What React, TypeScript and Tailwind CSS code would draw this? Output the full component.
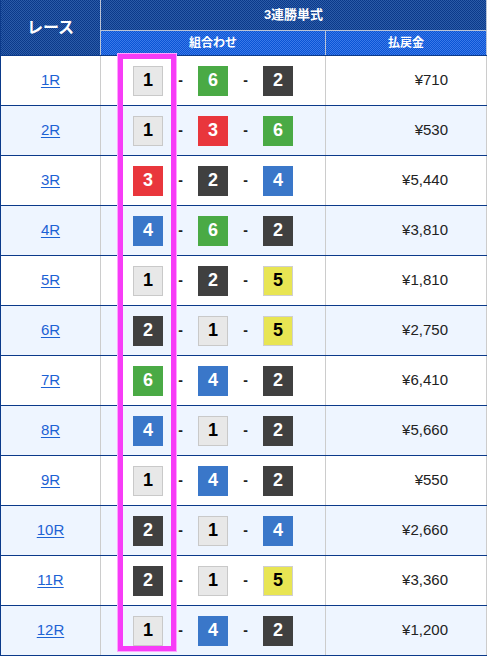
import type { ReactNode } from "react";

type Race = { race: string; combo: number[]; payout: string };

const races: Race[] = [
  { race: "1R", combo: [1, 6, 2], payout: "¥710" },
  { race: "2R", combo: [1, 3, 6], payout: "¥530" },
  { race: "3R", combo: [3, 2, 4], payout: "¥5,440" },
  { race: "4R", combo: [4, 6, 2], payout: "¥3,810" },
  { race: "5R", combo: [1, 2, 5], payout: "¥1,810" },
  { race: "6R", combo: [2, 1, 5], payout: "¥2,750" },
  { race: "7R", combo: [6, 4, 2], payout: "¥6,410" },
  { race: "8R", combo: [4, 1, 2], payout: "¥5,660" },
  { race: "9R", combo: [1, 4, 2], payout: "¥550" },
  { race: "10R", combo: [2, 1, 4], payout: "¥2,660" },
  { race: "11R", combo: [2, 1, 5], payout: "¥3,360" },
  { race: "12R", combo: [1, 4, 2], payout: "¥1,200" },
];

// 艇番ごとの色
const boatStyle: Record<number, string> = {
  1: "bg-[#e8e8e8] text-black border border-[#c9c9c9]",
  2: "bg-[#404040] text-white",
  3: "bg-[#e9363c] text-white",
  4: "bg-[#3a77c9] text-white",
  5: "bg-[#e8e553] text-black border border-[#cfcfcf]",
  6: "bg-[#4aaa45] text-white",
};

function Boat({ n }: { n: number }) {
  return (
    <span
      className={`w-[30px] h-[30px] flex items-center justify-center text-[18px] font-bold ${boatStyle[n]}`}
    >
      {n}
    </span>
  );
}

function Dash() {
  return <span className="w-[35px] text-center text-[14px] font-bold text-[#222]">-</span>;
}

function HeadCell({ className, children }: { className: string; children: ReactNode }) {
  return (
    <div className={`flex items-center justify-center text-white font-bold ${className}`}>
      {children}
    </div>
  );
}

const darkBg =
  "bg-[#1a4a98] bg-[repeating-conic-gradient(#0b3a8a_0_25%,#2b5ba8_0_50%)] bg-[length:2px_2px]";
const brightBg =
  "bg-[#2263dc] bg-[repeating-conic-gradient(#0a54d4_0_25%,#3a78e8_0_50%)] bg-[length:2px_2px]";

export default function App() {
  return (
    <div
      className="relative w-[487px] bg-white border-l border-[#0b3a8a]"
      style={{ fontFamily: '"Liberation Sans", "Noto Sans CJK JP", sans-serif' }}
    >
      {/* ヘッダー */}
      <div className="flex h-[56px] border-b border-[#0b3a8a]">
        <HeadCell className={`w-[100px] border-r border-[#b9c3d6] text-[16px] ${darkBg}`}>
          レース
        </HeadCell>
        <div className="w-[386px] flex flex-col border-r border-[#b9c3d6]">
          <HeadCell className={`h-[31px] border-b border-[#b9c3d6] text-[13px] ${darkBg}`}>
            3連勝単式
          </HeadCell>
          <div className={`flex flex-1 ${brightBg}`}>
            <HeadCell className="w-[225px] border-r border-[#b9c3d6] text-[12px]">
              組合わせ
            </HeadCell>
            <HeadCell className="flex-1 text-[12px]">払戻金</HeadCell>
          </div>
        </div>
      </div>

      {/* 結果行 */}
      {races.map((r, i) => (
        <div
          key={r.race}
          className={`flex h-[50px] border-b border-[#0b3a8a] ${i % 2 ? "bg-[#eef5ff]" : "bg-white"}`}
        >
          <div className="w-[100px] flex items-center justify-center border-r border-[#cccccc]">
            <a href="#" className="text-[15px] text-[#1c62d4] underline underline-offset-2">
              {r.race}
            </a>
          </div>
          <div className="w-[225px] flex items-center justify-center border-r border-[#cccccc]">
            <Boat n={r.combo[0]} />
            <Dash />
            <Boat n={r.combo[1]} />
            <Dash />
            <Boat n={r.combo[2]} />
          </div>
          <div className="w-[161px] flex items-center justify-end pr-[38px] border-r border-[#cccccc] text-[15px] text-[#222]">
            {r.payout}
          </div>
        </div>
      ))}

      {/* 1着の強調枠 */}
      <div className="absolute left-[117px] top-[54px] w-[58px] h-[597px] border-[5px] border-[#f73cf7] shadow-[0_0_0_1px_#ffa3ff] pointer-events-none" />
    </div>
  );
}
